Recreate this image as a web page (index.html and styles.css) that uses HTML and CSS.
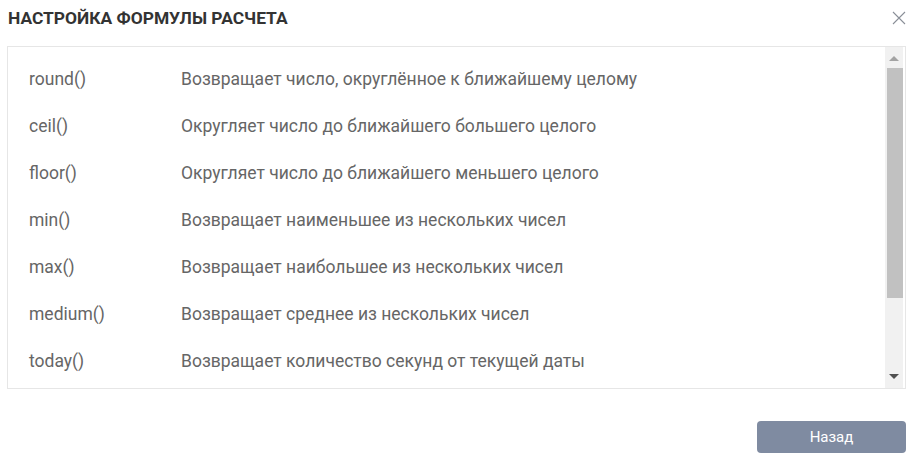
FILE: index.html
```html
<!DOCTYPE html>
<html lang="ru">
<head>
<meta charset="utf-8">
<title>Настройка формулы расчета</title>
<link rel="stylesheet" href="styles.css">
</head>
<body>
<div class="dialog">
  <div class="header">
    <h1 class="title">НАСТРОЙКА ФОРМУЛЫ РАСЧЕТА</h1>
    <button class="close" aria-label="Закрыть">
      <svg width="14" height="14" viewBox="0 0 14 14"><path d="M1 1 L13 13 M13 1 L1 13" stroke="#8a8f98" stroke-width="1.1" fill="none"/></svg>
    </button>
  </div>
  <div class="box">
    <div class="list">
      <div class="row"><span class="fn">round()</span><span class="desc">Возвращает число, округлённое к ближайшему целому</span></div>
      <div class="row"><span class="fn">ceil()</span><span class="desc">Округляет число до ближайшего большего целого</span></div>
      <div class="row"><span class="fn">floor()</span><span class="desc">Округляет число до ближайшего меньшего целого</span></div>
      <div class="row"><span class="fn">min()</span><span class="desc">Возвращает наименьшее из нескольких чисел</span></div>
      <div class="row"><span class="fn">max()</span><span class="desc">Возвращает наибольшее из нескольких чисел</span></div>
      <div class="row"><span class="fn">medium()</span><span class="desc">Возвращает среднее из нескольких чисел</span></div>
      <div class="row"><span class="fn">today()</span><span class="desc">Возвращает количество секунд от текущей даты</span></div>
    </div>
    <div class="scrollbar">
      <div class="arrow up"></div>
      <div class="track"><div class="thumb"></div></div>
      <div class="arrow down"></div>
    </div>
  </div>
  <div class="footer">
    <button class="btn">Назад</button>
  </div>
</div>
</body>
</html>
```
FILE: styles.css
```css
* { box-sizing: border-box; }
html, body { margin: 0; padding: 0; background: #fff; }
body { font-family: Roboto, "Liberation Sans", sans-serif; }
.dialog { width: 912px; height: 456px; padding: 0 6px 0 7px; display: flex; flex-direction: column; }
.header { height: 46px; display: flex; align-items: center; justify-content: space-between; padding-bottom: 10px; }
.title { margin: 0; padding-left: 1px; font-size: 17.4px; font-weight: 700; color: #333; letter-spacing: 0; }
.close { border: 0; background: none; padding: 0; width: 14px; height: 14px; display: flex; margin-right: 0; }
.box { height: 343px; border: 1px solid #e6e6e6; display: flex; overflow: hidden; }
.list { flex: 1; padding: 8px 0 0 21px; }
.row { height: 47px; display: flex; align-items: center; font-size: 17.5px; color: #666; padding-top: 1px; }
.fn { width: 152px; flex: none; }
.desc { white-space: nowrap; }
.scrollbar { width: 18px; background: #f1f1f1; display: flex; flex-direction: column; margin-right: 2px; }
.arrow { height: 21px; display: flex; justify-content: center; align-items: center; }
.arrow::before { content: ""; width: 0; height: 0; border-left: 5px solid transparent; border-right: 5px solid transparent; }
.arrow.up::before { border-bottom: 5px solid #a3a3a3; margin-top: 2px; }
.arrow.down::before { border-top: 5px solid #505050; margin-bottom: 2px; }
.track { flex: 1; padding: 0 0 0 2px; }
.thumb { height: 230px; background: #c1c1c1; }
.footer { flex: 1; display: flex; justify-content: flex-end; align-items: flex-start; padding-top: 32px; }
.btn { width: 149px; height: 32px; border: 0; border-radius: 4px; background: #7f8ba1; color: #fff; font-family: Roboto, "Liberation Sans", sans-serif; font-size: 15px; }
```
